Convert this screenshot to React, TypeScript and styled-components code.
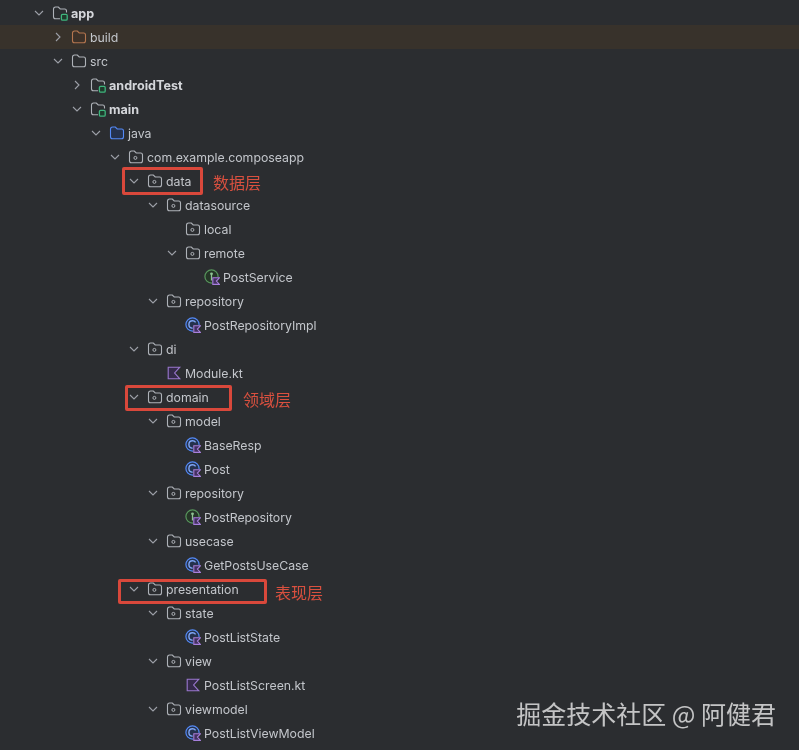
import React from 'react';
import styled, { createGlobalStyle } from 'styled-components';

const GlobalStyle = createGlobalStyle`
	html, body {
		margin: 0;
		padding: 0;
		background: #2b2d30;
	}
`;

type IconKind = 'module' | 'folder' | 'excluded' | 'source' | 'package' | 'class' | 'interface' | 'kotlin';

interface Node {
	label: string;
	depth: number;
	icon: IconKind;
	chevron?: 'open' | 'closed';
	bold?: boolean;
	selected?: boolean;
}

const nodes: Node[] = [
	{ label: 'app', depth: 0, icon: 'module', chevron: 'open', bold: true },
	{ label: 'build', depth: 1, icon: 'excluded', chevron: 'closed', selected: true },
	{ label: 'src', depth: 1, icon: 'folder', chevron: 'open' },
	{ label: 'androidTest', depth: 2, icon: 'module', chevron: 'closed', bold: true },
	{ label: 'main', depth: 2, icon: 'module', chevron: 'open', bold: true },
	{ label: 'java', depth: 3, icon: 'source', chevron: 'open' },
	{ label: 'com.example.composeapp', depth: 4, icon: 'package', chevron: 'open' },
	{ label: 'data', depth: 5, icon: 'package', chevron: 'open' },
	{ label: 'datasource', depth: 6, icon: 'package', chevron: 'open' },
	{ label: 'local', depth: 7, icon: 'package' },
	{ label: 'remote', depth: 7, icon: 'package', chevron: 'open' },
	{ label: 'PostService', depth: 8, icon: 'interface' },
	{ label: 'repository', depth: 6, icon: 'package', chevron: 'open' },
	{ label: 'PostRepositoryImpl', depth: 7, icon: 'class' },
	{ label: 'di', depth: 5, icon: 'package', chevron: 'open' },
	{ label: 'Module.kt', depth: 6, icon: 'kotlin' },
	{ label: 'domain', depth: 5, icon: 'package', chevron: 'open' },
	{ label: 'model', depth: 6, icon: 'package', chevron: 'open' },
	{ label: 'BaseResp', depth: 7, icon: 'class' },
	{ label: 'Post', depth: 7, icon: 'class' },
	{ label: 'repository', depth: 6, icon: 'package', chevron: 'open' },
	{ label: 'PostRepository', depth: 7, icon: 'interface' },
	{ label: 'usecase', depth: 6, icon: 'package', chevron: 'open' },
	{ label: 'GetPostsUseCase', depth: 7, icon: 'class' },
	{ label: 'presentation', depth: 5, icon: 'package', chevron: 'open' },
	{ label: 'state', depth: 6, icon: 'package', chevron: 'open' },
	{ label: 'PostListState', depth: 7, icon: 'class' },
	{ label: 'view', depth: 6, icon: 'package', chevron: 'open' },
	{ label: 'PostListScreen.kt', depth: 7, icon: 'kotlin' },
	{ label: 'viewmodel', depth: 6, icon: 'package', chevron: 'open' },
	{ label: 'PostListViewModel', depth: 7, icon: 'class' },
];

const notes = [
	{ text: '数据层', x: 122, y: 167, w: 81, h: 28, gap: 13, drop: 1 },
	{ text: '领域层', x: 125, y: 385, w: 107, h: 26, gap: 14, drop: 1 },
	{ text: '表现层', x: 118, y: 579, w: 149, h: 25, gap: 11, drop: 0 },
];

const FOLDER = 'M1.5 4.2C1.5 3 2.4 2 3.6 2H6.3L8.2 4H12.6C13.7 4 14.5 4.9 14.5 6V11.8C14.5 13 13.6 13.8 12.5 13.8H3.5C2.4 13.8 1.5 13 1.5 11.8Z';

const FolderIcon = ({ stroke, fill }: { stroke: string; fill?: string }) => (
	<path d={FOLDER} fill={fill || 'none'} stroke={stroke} strokeWidth="1.1" />
);

const KotlinBadge = () => (
	<g>
		<rect x="8" y="8" width="8" height="8" fill="#2b2d30" />
		<path d="M8.8 8.8H15.4L12.4 12L15.4 15.4H8.8Z" fill="#43305f" stroke="#a67fdc" strokeWidth="1.1" />
	</g>
);

const TreeIcon = ({ kind }: { kind: IconKind }) => {
	if(kind === 'module') {
		return (
			<svg width="16" height="16" viewBox="0 0 16 16">
				<path d="M8 13.8H3.5C2.4 13.8 1.5 13 1.5 11.8V4.2C1.5 3 2.4 2 3.6 2H6.3L8.2 4H12.6C13.7 4 14.5 4.9 14.5 6V7.5" fill="none" stroke="#aeb2b8" strokeWidth="1.1" />
				<rect x="9.4" y="9.4" width="5.8" height="5.8" rx="1.2" fill="#1f3a2c" stroke="#3fb57d" strokeWidth="1.3" />
			</svg>
		);
	}
	if(kind === 'kotlin') {
		return (
			<svg width="16" height="16" viewBox="0 0 16 16">
				<path d="M2.2 2.2H13.8L8.6 8L13.8 13.8H2.2Z" fill="#352a4a" stroke="#9a77cf" strokeWidth="1.1" />
			</svg>
		);
	}
	if(kind === 'class' || kind === 'interface') {
		const main = kind === 'class' ? '#548af7' : '#57965c';
		const back = kind === 'class' ? '#25324d' : '#253627';
		return (
			<svg width="16" height="16" viewBox="0 0 16 16">
				<circle cx="7.5" cy="7.5" r="6.6" fill={back} stroke={main} strokeWidth="1.2" />
				{kind === 'class'
					? <path d="M10.6 5.4C9.9 4.4 8.8 3.8 7.6 3.8C5.5 3.8 3.9 5.4 3.9 7.5C3.9 9.6 5.5 11.2 7.6 11.2" fill="none" stroke="#7fa6f5" strokeWidth="1.4" />
					: (
						<g>
							<circle cx="7.5" cy="4.8" r="1.4" fill="#8fc394" />
							<path d="M7.5 5.5V11.5" fill="none" stroke="#8fc394" strokeWidth="1.3" />
						</g>
					)}
				<KotlinBadge />
			</svg>
		);
	}
	const colors: Record<string, [string, string?]> = {
		folder: ['#aeb2b8'],
		excluded: ['#b5764f', '#3d3128'],
		source: ['#548af7', '#25324d'],
		package: ['#aeb2b8'],
	};
	const [stroke, fill] = colors[kind];
	return (
		<svg width="16" height="16" viewBox="0 0 16 16">
			<FolderIcon stroke={stroke} fill={fill} />
			{kind === 'package' && <circle cx="7.4" cy="8.9" r="1.5" fill="none" stroke="#aeb2b8" strokeWidth="1" />}
		</svg>
	);
};

const Page = styled.div`
	position: relative;
	width: 799px;
	height: 750px;
	overflow: hidden;
	padding-top: 1px;
	box-sizing: border-box;
	background: #2b2d30;
	font-family: Inter, "Noto Sans", sans-serif;
	filter: blur(0.3px);
`;

const Row = styled.div<{ $depth: number; $selected?: boolean }>`
	display: flex;
	align-items: center;
	height: 24px;
	padding-left: ${props => 33 + props.$depth * 19}px;
	background: ${props => (props.$selected ? '#38322b' : 'transparent')};
`;

const Chevron = styled.svg`
	flex: none;
	width: 12px;
	height: 12px;
	margin-right: 7px;
`;

const ChevronGap = styled.span`
	flex: none;
	width: 19px;
`;

const IconBox = styled.span`
	flex: none;
	display: flex;
	width: 16px;
	height: 16px;
	margin-right: 3px;
`;

const Label = styled.span<{ $bold?: boolean }>`
	font-size: ${props => (props.$bold ? 12.6 : 12.3)}px;
	font-weight: ${props => (props.$bold ? 700 : 400)};
	color: ${props => (props.$bold ? '#d5d7db' : '#c3c6cb')};
	white-space: nowrap;
`;

const NoteBox = styled.div<{ $x: number; $y: number; $w: number; $h: number }>`
	position: absolute;
	left: ${props => props.$x}px;
	top: ${props => props.$y}px;
	width: ${props => props.$w}px;
	height: ${props => props.$h}px;
	box-sizing: border-box;
	border: 3px solid #d9483b;
	border-radius: 2px;
`;

const NoteText = styled.span<{ $gap: number; $drop: number }>`
	position: absolute;
	left: calc(100% + ${props => props.$gap}px);
	top: calc(50% + ${props => props.$drop}px);
	transform: translateY(-50%);
	font-family: "Noto Sans CJK SC", sans-serif;
	font-size: 16px;
	line-height: 20px;
	color: #d9503f;
	white-space: nowrap;
`;

const Watermark = styled.div`
	position: absolute;
	right: 23px;
	bottom: 20px;
	font-family: "Noto Sans CJK SC", sans-serif;
	font-size: 25px;
	line-height: 34px;
	color: rgba(255, 255, 255, 0.72);
	white-space: nowrap;
`;

export default function App() {
	return (
		<Page>
			<GlobalStyle />
			{nodes.map((node, i) => (
				<Row key={i} $depth={node.depth} $selected={node.selected}>
					{node.chevron ? (
						<Chevron viewBox="0 0 12 12">
							<path
								d={node.chevron === 'open' ? 'M2 4L6 8L10 4' : 'M4 2L8 6L4 10'}
								fill="none"
								stroke="#9da0a8"
								strokeWidth="1.1"
							/>
						</Chevron>
					) : <ChevronGap />}
					<IconBox><TreeIcon kind={node.icon} /></IconBox>
					<Label $bold={node.bold}>{node.label}</Label>
				</Row>
			))}
			{notes.map(note => (
				<NoteBox key={note.text} $x={note.x} $y={note.y} $w={note.w} $h={note.h}>
					<NoteText $gap={note.gap} $drop={note.drop}>{note.text}</NoteText>
				</NoteBox>
			))}
			<Watermark>掘金技术社区 @ 阿健君</Watermark>
		</Page>
	);
}
